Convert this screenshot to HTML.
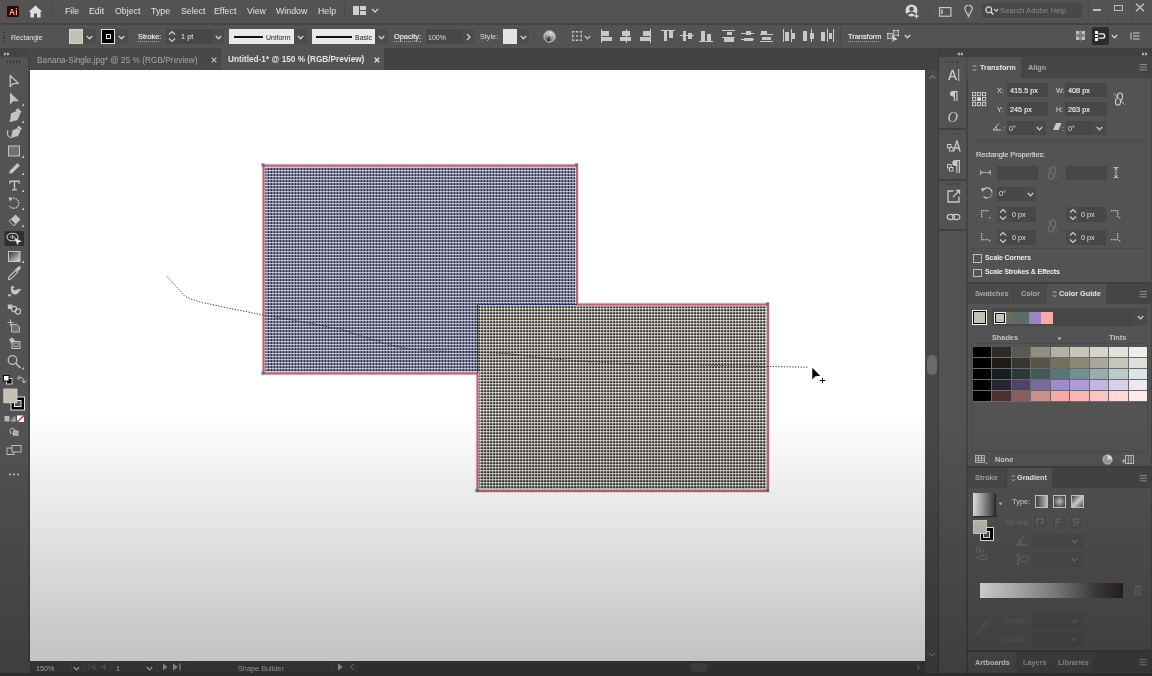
<!DOCTYPE html>
<html><head><meta charset="utf-8">
<style>
*{margin:0;padding:0;box-sizing:border-box}
html,body{width:1152px;height:676px;overflow:hidden;background:#535353;font-family:"Liberation Sans",sans-serif;color:#d8d8d8}
.a{position:absolute}
.t{position:absolute;white-space:nowrap;line-height:1;will-change:transform}
</style></head><body>
<!-- MENU BAR -->
<div class="a" style="left:0;top:0;width:1152px;height:23px;background:#535353"></div>
<div class="a" style="left:0;top:23px;width:1152px;height:2px;background:#434343"></div>

<!-- menu content -->
<div class="a" style="left:7px;top:6px;width:12px;height:11px;background:#330a03;border-radius:1px"></div>
<div class="t" style="left:8.7px;top:7.6px;font-size:8.3px;font-weight:bold;color:#f7b09a;letter-spacing:0.3px">Ai</div>
<svg class="a" style="left:28px;top:5px" width="15" height="13" viewBox="0 0 15 13"><path d="M7.5 0.6 L14.2 6.8 L12.6 6.8 L12.6 12.4 L9 12.4 L9 8.4 L6 8.4 L6 12.4 L2.4 12.4 L2.4 6.8 L0.8 6.8 Z" fill="#dedede"/></svg>
<div class="a" style="left:52px;top:2px;width:1px;height:18px;background:#4a4a4a"></div>
<div class="t" style="left:64.5px;top:6.5px;font-size:8.8px;color:#e2e2e2">File</div>
<div class="t" style="left:88.5px;top:6.5px;font-size:8.8px;color:#e2e2e2">Edit</div>
<div class="t" style="left:114.5px;top:6.5px;font-size:8.8px;color:#e2e2e2">Object</div>
<div class="t" style="left:151px;top:6.5px;font-size:8.8px;color:#e2e2e2">Type</div>
<div class="t" style="left:180.5px;top:6.5px;font-size:8.8px;color:#e2e2e2">Select</div>
<div class="t" style="left:214px;top:6.5px;font-size:8.8px;color:#e2e2e2">Effect</div>
<div class="t" style="left:247px;top:6.5px;font-size:8.8px;color:#e2e2e2">View</div>
<div class="t" style="left:275.5px;top:6.5px;font-size:8.8px;color:#e2e2e2">Window</div>
<div class="t" style="left:317.5px;top:6.5px;font-size:8.8px;color:#e2e2e2">Help</div>
<div class="a" style="left:344px;top:3px;width:1px;height:17px;background:#4a4a4a"></div>
<svg class="a" style="left:353px;top:6px" width="14" height="9" viewBox="0 0 14 9"><rect x="0" y="0" width="6" height="9" fill="#d0d0d0"/><rect x="7" y="0" width="6" height="4" fill="#d0d0d0"/><rect x="7" y="5" width="6" height="4" fill="#d0d0d0"/></svg>
<svg class="a" style="left:371px;top:8px" width="8" height="5" viewBox="0 0 8 5"><path d="M1 1 L4 4 L7 1" stroke="#d0d0d0" stroke-width="1.3" fill="none"/></svg>
<!-- right side of menu -->
<svg class="a" style="left:905px;top:4px" width="15" height="15" viewBox="0 0 15 15"><circle cx="6.5" cy="6.5" r="6" fill="#d8d8d8"/><circle cx="6.5" cy="5" r="2.3" fill="#535353"/><path d="M2.3 10.5 Q6.5 6.5 10.7 10.5" stroke="#535353" stroke-width="1.8" fill="none"/><path d="M11.5 10 V14.5 M9.2 12.2 H13.8" stroke="#d8d8d8" stroke-width="1.2"/></svg>
<div class="a" style="left:929px;top:3px;width:1px;height:17px;background:#4a4a4a"></div>
<svg class="a" style="left:939px;top:7px" width="13" height="10" viewBox="0 0 13 10"><rect x="0.6" y="0.6" width="11.3" height="8.6" stroke="#d0d0d0" stroke-width="1.1" fill="none"/><rect x="2.3" y="2.5" width="1.4" height="4.5" fill="#d0d0d0"/></svg>
<svg class="a" style="left:963.5px;top:5px" width="9" height="13" viewBox="0 0 9 13"><path d="M3 9 Q3 7.3 1.6 5.8 A3.6 3.6 0 1 1 7.4 5.8 Q6 7.3 6 9 Z" stroke="#d0d0d0" stroke-width="1.1" fill="none"/><path d="M3.3 10.6 H5.7 M3.8 12 H5.2" stroke="#d0d0d0" stroke-width="1.1"/></svg>
<div class="a" style="left:982px;top:3px;width:100px;height:15px;background:#484848;border-radius:1px"></div>
<svg class="a" style="left:985px;top:6px" width="14" height="10" viewBox="0 0 14 10"><circle cx="3.8" cy="3.8" r="2.9" stroke="#d8d8d8" stroke-width="1.3" fill="none"/><path d="M6 6 L8.3 8.5" stroke="#d8d8d8" stroke-width="1.5"/><path d="M9.2 3.2 L11.2 5.2 L13.2 3.2" stroke="#d8d8d8" stroke-width="1.1" fill="none"/></svg>
<div class="t" style="left:1000px;top:7px;font-size:7.7px;color:#8a8a8a">Search Adobe Help</div>
<div class="a" style="left:1088px;top:0px;width:1px;height:22px;background:#4c4c4c"></div>
<div class="a" style="left:1093px;top:9px;width:8px;height:1.5px;background:#bdbdbd"></div>
<div class="a" style="left:1108px;top:0px;width:1px;height:22px;background:#4c4c4c"></div>
<div class="a" style="left:1114px;top:5px;width:8.5px;height:6px;border:1.3px solid #bdbdbd"></div>
<div class="a" style="left:1131px;top:0px;width:1px;height:22px;background:#4c4c4c"></div>
<svg class="a" style="left:1135px;top:3px" width="10" height="9" viewBox="0 0 10 9"><path d="M1 0.8 L9 8.2 M9 0.8 L1 8.2" stroke="#c4c4c4" stroke-width="1.3"/></svg>

<!-- CONTROL BAR -->
<div class="a" style="left:0;top:25px;width:1152px;height:23px;background:#535353"></div>

<!-- control content -->
<div class="a" style="left:3px;top:29px;width:2px;height:14px;background:repeating-linear-gradient(#3c3c3c 0 1.2px,transparent 1.2px 2.8px)"></div>
<div class="t" style="left:10.5px;top:33.5px;font-size:7px;color:#e4e4e4">Rectangle</div>
<div class="a" style="left:69px;top:29px;width:14px;height:14.5px;background:#c3c1b4;border:1px solid #d4d3cb"></div>
<div class="a" style="left:83px;top:29px;width:13px;height:14.5px;background:#4c4c4c"></div>
<svg class="a" style="left:86px;top:35px" width="7" height="5" viewBox="0 0 7 5"><path d="M0.8 1 L3.5 3.8 L6.2 1" stroke="#d0d0d0" stroke-width="1.3" fill="none"/></svg>
<div class="a" style="left:100.5px;top:29px;width:14.5px;height:14.5px;background:#000;border:1px solid #e0e0e0"></div>
<div class="a" style="left:105.5px;top:34px;width:5.5px;height:5px;border:1.3px solid #e0e0e0;background:#000"></div>
<div class="a" style="left:115px;top:29px;width:13px;height:14.5px;background:#4c4c4c"></div>
<svg class="a" style="left:118px;top:35px" width="7" height="5" viewBox="0 0 7 5"><path d="M0.8 1 L3.5 3.8 L6.2 1" stroke="#d0d0d0" stroke-width="1.3" fill="none"/></svg>
<div class="t" style="left:137.8px;top:32.8px;font-size:7.4px;color:#ececec;-webkit-text-stroke:0.15px #ececec">Stroke:</div>
<div class="a" style="left:138px;top:41px;width:22px;height:1px;background:repeating-linear-gradient(to right,#aaa 0 1px,transparent 1px 2px)"></div>
<div class="a" style="left:166px;top:29px;width:12px;height:14.5px;background:#4a4a4a"></div>
<svg class="a" style="left:168px;top:30px" width="8" height="13" viewBox="0 0 8 13"><path d="M1 4.5 L4 1.5 L7 4.5 M1 8.5 L4 11.5 L7 8.5" stroke="#d0d0d0" stroke-width="1.2" fill="none"/></svg>
<div class="a" style="left:178px;top:29px;width:34px;height:14.5px;background:#474747"></div>
<div class="t" style="left:181px;top:32.8px;font-size:7.4px;color:#e6e6e6">1 pt</div>
<div class="a" style="left:212px;top:29px;width:12px;height:14.5px;background:#4c4c4c"></div>
<svg class="a" style="left:214.5px;top:35px" width="7" height="5" viewBox="0 0 7 5"><path d="M0.8 1 L3.5 3.8 L6.2 1" stroke="#d0d0d0" stroke-width="1.3" fill="none"/></svg>
<div class="a" style="left:229px;top:29px;width:65px;height:14.5px;background:#e9e9e9"></div>
<div class="a" style="left:234px;top:36px;width:29px;height:2px;background:#111"></div>
<div class="t" style="left:266px;top:33.8px;font-size:7px;color:#222">Uniform</div>
<div class="a" style="left:294px;top:29px;width:13px;height:14.5px;background:#4c4c4c"></div>
<svg class="a" style="left:297px;top:35px" width="7" height="5" viewBox="0 0 7 5"><path d="M0.8 1 L3.5 3.8 L6.2 1" stroke="#d0d0d0" stroke-width="1.3" fill="none"/></svg>
<div class="a" style="left:312px;top:29px;width:63px;height:14.5px;background:#e9e9e9"></div>
<div class="a" style="left:316px;top:35.5px;width:36px;height:2.5px;background:#111"></div>
<div class="t" style="left:355px;top:33.8px;font-size:7px;color:#222">Basic</div>
<div class="a" style="left:375px;top:29px;width:13px;height:14.5px;background:#4c4c4c"></div>
<svg class="a" style="left:378px;top:35px" width="7" height="5" viewBox="0 0 7 5"><path d="M0.8 1 L3.5 3.8 L6.2 1" stroke="#d0d0d0" stroke-width="1.3" fill="none"/></svg>
<div class="t" style="left:394px;top:32.8px;font-size:7.4px;color:#ececec;-webkit-text-stroke:0.15px #ececec">Opacity:</div>
<div class="a" style="left:394px;top:41px;width:27px;height:1px;background:repeating-linear-gradient(to right,#aaa 0 1px,transparent 1px 2px)"></div>
<div class="a" style="left:426px;top:29px;width:36px;height:14.5px;background:#474747"></div>
<div class="t" style="left:428px;top:33.5px;font-size:7px;color:#dcdcdc">100%</div>
<div class="a" style="left:462px;top:29px;width:12px;height:14.5px;background:#4c4c4c"></div>
<svg class="a" style="left:466px;top:33px" width="5" height="8" viewBox="0 0 5 8"><path d="M1 1 L4 4 L1 7" stroke="#d0d0d0" stroke-width="1.3" fill="none"/></svg>
<div class="t" style="left:480px;top:32.8px;font-size:7.2px;color:#dcdcdc">Style:</div>
<div class="a" style="left:503px;top:29px;width:14px;height:14.5px;background:#e4e4e4"></div>
<div class="a" style="left:517px;top:29px;width:12px;height:14.5px;background:#4c4c4c"></div>
<svg class="a" style="left:519.5px;top:35px" width="7" height="5" viewBox="0 0 7 5"><path d="M0.8 1 L3.5 3.8 L6.2 1" stroke="#d0d0d0" stroke-width="1.3" fill="none"/></svg>
<div class="a" style="left:533px;top:27px;width:1px;height:19px;background:#4f4f4f"></div>
<svg class="a" style="left:542.5px;top:29.5px" width="13" height="13" viewBox="0 0 13 13"><path d="M6.5 6.5 L6.50 1.30 A5.2 5.2 0 0 1 9.56 2.29 Z" fill="#e6e6e6"/><path d="M6.5 6.5 L9.56 2.29 A5.2 5.2 0 0 1 11.45 4.89 Z" fill="#d0d0d0"/><path d="M6.5 6.5 L11.45 4.89 A5.2 5.2 0 0 1 11.45 8.11 Z" fill="#bdbdbd"/><path d="M6.5 6.5 L11.45 8.11 A5.2 5.2 0 0 1 9.56 10.71 Z" fill="#a0a0a0"/><path d="M6.5 6.5 L9.56 10.71 A5.2 5.2 0 0 1 6.50 11.70 Z" fill="#7a7a7a"/><path d="M6.5 6.5 L6.50 11.70 A5.2 5.2 0 0 1 3.44 10.71 Z" fill="#2a2a2a"/><path d="M6.5 6.5 L3.44 10.71 A5.2 5.2 0 0 1 1.55 8.11 Z" fill="#6a6a6a"/><path d="M6.5 6.5 L1.55 8.11 A5.2 5.2 0 0 1 1.55 4.89 Z" fill="#9a9a9a"/><path d="M6.5 6.5 L1.55 4.89 A5.2 5.2 0 0 1 3.44 2.29 Z" fill="#b8b8b8"/><path d="M6.5 6.5 L3.44 2.29 A5.2 5.2 0 0 1 6.50 1.30 Z" fill="#cfcfcf"/><circle cx="6.5" cy="6.5" r="5.6" fill="none" stroke="#d8d8d8" stroke-width="1"/></svg>
<div class="a" style="left:562px;top:27px;width:1px;height:19px;background:#4f4f4f"></div>
<svg class="a" style="left:572px;top:31px" width="10" height="10" viewBox="0 0 10 10"><rect x="0" y="0" width="1.6" height="1.6" fill="#d8d8d8"/><rect x="0" y="4.2" width="1.6" height="1.6" fill="#d8d8d8"/><rect x="0" y="8.4" width="1.6" height="1.6" fill="#d8d8d8"/><rect x="4.2" y="0" width="1.6" height="1.6" fill="#d8d8d8"/><rect x="4.2" y="4.2" width="1.6" height="1.6" fill="#d8d8d8"/><rect x="4.2" y="8.4" width="1.6" height="1.6" fill="#d8d8d8"/><rect x="8.4" y="0" width="1.6" height="1.6" fill="#d8d8d8"/><rect x="8.4" y="4.2" width="1.6" height="1.6" fill="#d8d8d8"/><rect x="8.4" y="8.4" width="1.6" height="1.6" fill="#d8d8d8"/><path d="M1.6 0.8 H4.2 M5.8 0.8 H8.4 M1.6 9.2 H4.2 M5.8 9.2 H8.4 M0.8 1.6 V4.2 M0.8 5.8 V8.4 M9.2 1.6 V4.2 M9.2 5.8 V8.4" stroke="#9a9a9a" stroke-width="0.7"/></svg>
<svg class="a" style="left:584px;top:34.5px" width="7" height="5" viewBox="0 0 7 5"><path d="M0.8 1 L3.5 3.8 L6.2 1" stroke="#bbb" stroke-width="1.3" fill="none"/></svg>
<div class="a" style="left:595px;top:27px;width:1px;height:19px;background:#4f4f4f"></div>
<div class="a" style="left:601px;top:29px;width:1px;height:13.5px;background:#c8c8c8"></div><div class="a" style="left:602px;top:31px;width:7px;height:4.5px;background:#c8c8c8"></div><div class="a" style="left:602px;top:37px;width:10px;height:4px;background:#c8c8c8"></div><div class="a" style="left:625.5px;top:29px;width:1px;height:13.5px;background:#c8c8c8"></div><div class="a" style="left:621.5px;top:31px;width:8px;height:4.5px;background:#c8c8c8"></div><div class="a" style="left:620px;top:37px;width:11px;height:4px;background:#c8c8c8"></div><div class="a" style="left:650px;top:29px;width:1px;height:13.5px;background:#c8c8c8"></div><div class="a" style="left:643px;top:31px;width:7px;height:4.5px;background:#c8c8c8"></div><div class="a" style="left:640px;top:37px;width:10px;height:4px;background:#c8c8c8"></div><div class="a" style="left:661px;top:30px;width:14px;height:1px;background:#c8c8c8"></div><div class="a" style="left:663.5px;top:31px;width:3.5px;height:10px;background:#c8c8c8"></div><div class="a" style="left:668.5px;top:31px;width:4.5px;height:6.5px;background:#c8c8c8"></div><div class="a" style="left:680px;top:35px;width:14px;height:1px;background:#c8c8c8"></div><div class="a" style="left:682.5px;top:31px;width:3.5px;height:10px;background:#c8c8c8"></div><div class="a" style="left:688px;top:32.5px;width:4px;height:6px;background:#c8c8c8"></div><div class="a" style="left:699px;top:41px;width:14px;height:1px;background:#c8c8c8"></div><div class="a" style="left:701px;top:31px;width:4px;height:10px;background:#c8c8c8"></div><div class="a" style="left:706.5px;top:34px;width:4.5px;height:7px;background:#c8c8c8"></div><div class="a" style="left:722px;top:30px;width:13px;height:1px;background:#c8c8c8"></div><div class="a" style="left:727px;top:31.5px;width:4.5px;height:3.5px;background:#c8c8c8"></div><div class="a" style="left:722px;top:37px;width:13px;height:1px;background:#c8c8c8"></div><div class="a" style="left:724px;top:37.5px;width:9.5px;height:4px;background:#c8c8c8"></div><div class="a" style="left:741px;top:32.5px;width:13px;height:1px;background:#c8c8c8"></div><div class="a" style="left:746px;top:31px;width:5px;height:4px;background:#c8c8c8"></div><div class="a" style="left:741px;top:39px;width:13px;height:1px;background:#c8c8c8"></div><div class="a" style="left:743.5px;top:37.5px;width:9px;height:3.5px;background:#c8c8c8"></div><div class="a" style="left:760.5px;top:30.5px;width:6.5px;height:3px;background:#c8c8c8"></div><div class="a" style="left:760px;top:34px;width:13px;height:1px;background:#c8c8c8"></div><div class="a" style="left:762px;top:36.5px;width:9px;height:3.5px;background:#c8c8c8"></div><div class="a" style="left:760px;top:41px;width:13px;height:1px;background:#c8c8c8"></div><div class="a" style="left:783px;top:29px;width:1px;height:13px;background:#c8c8c8"></div><div class="a" style="left:785px;top:31.5px;width:4px;height:9px;background:#c8c8c8"></div><div class="a" style="left:790.5px;top:29px;width:1px;height:13px;background:#c8c8c8"></div><div class="a" style="left:792px;top:33px;width:3px;height:5.5px;background:#c8c8c8"></div><div class="a" style="left:803px;top:31px;width:4px;height:10px;background:#c8c8c8"></div><div class="a" style="left:807px;top:29px;width:1px;height:0px;background:#c8c8c8"></div><div class="a" style="left:811px;top:29px;width:1px;height:13px;background:#c8c8c8"></div><div class="a" style="left:809.5px;top:33px;width:4px;height:5.5px;background:#c8c8c8"></div><div class="a" style="left:821px;top:31.5px;width:4px;height:9px;background:#c8c8c8"></div><div class="a" style="left:826.5px;top:29px;width:1px;height:13px;background:#c8c8c8"></div><div class="a" style="left:829px;top:33px;width:3px;height:5.5px;background:#c8c8c8"></div><div class="a" style="left:833px;top:29px;width:1px;height:13px;background:#c8c8c8"></div>
<div class="a" style="left:840px;top:27px;width:1px;height:19px;background:#4a4a4a"></div>
<div class="t" style="left:847.5px;top:32.8px;font-size:7.4px;color:#ececec;-webkit-text-stroke:0.15px #ececec">Transform</div>
<div class="a" style="left:848px;top:40.5px;width:31px;height:1px;background:repeating-linear-gradient(to right,#aaa 0 1px,transparent 1px 2px)"></div>
<svg class="a" style="left:886px;top:29px" width="14" height="14" viewBox="0 0 14 14"><rect x="1.8" y="4.6" width="4.6" height="4.8" stroke="#c8c8c8" fill="#6a6a6a" stroke-width="0.8"/><rect x="7.6" y="1.6" width="4.8" height="5" stroke="#c8c8c8" fill="#6a6a6a" stroke-width="0.8"/><g fill="#dcdcdc"><circle cx="1.8" cy="4.6" r="0.8"/><circle cx="1.8" cy="9.4" r="0.8"/><circle cx="7.6" cy="1.6" r="0.8"/><circle cx="12.4" cy="1.6" r="0.8"/><circle cx="12.4" cy="6.6" r="0.8"/></g><path d="M6.6 6 L6.6 13 L8.2 11.3 L11.5 10.6 Z" fill="#d0d0d0"/></svg>
<svg class="a" style="left:904px;top:34px" width="7" height="5" viewBox="0 0 7 5"><path d="M0.8 1 L3.5 3.8 L6.2 1" stroke="#d0d0d0" stroke-width="1.3" fill="none"/></svg>
<svg class="a" style="left:1075px;top:30px" width="11" height="11" viewBox="0 0 11 11"><rect x="1" y="1" width="3.5" height="3.5" fill="#bdbdbd"/><rect x="6.5" y="1" width="3.5" height="3.5" fill="#bdbdbd"/><rect x="1" y="6.5" width="3.5" height="3.5" fill="#bdbdbd"/><rect x="6.5" y="6.5" width="3.5" height="3.5" fill="#bdbdbd"/><path d="M5.5 0 V11 M0 5.5 H11" stroke="#8a8a8a" stroke-width="0.8"/></svg>
<div class="a" style="left:1091.5px;top:27px;width:17px;height:18px;background:#2d2d2d;border-radius:2px"></div>
<div class="a" style="left:1095px;top:31px;width:3px;height:2.5px;background:#f0f0f0"></div>
<div class="a" style="left:1095px;top:34.5px;width:3px;height:2.5px;background:#f0f0f0"></div>
<div class="a" style="left:1095px;top:38px;width:3px;height:3px;background:#f0f0f0"></div>
<svg class="a" style="left:1098px;top:33px" width="8" height="6" viewBox="0 0 8 6"><path d="M0.5 0.8 H4.5 A2.2 2.2 0 0 1 4.5 5.2 H0.5" stroke="#f0f0f0" stroke-width="1.3" fill="none"/></svg>
<svg class="a" style="left:1110.5px;top:34px" width="7" height="5" viewBox="0 0 7 5"><path d="M0.8 1 L3.5 3.8 L6.2 1" stroke="#d0d0d0" stroke-width="1.3" fill="none"/></svg>
<svg class="a" style="left:1130px;top:32px" width="10" height="8" viewBox="0 0 10 8"><path d="M1 0.5 V7.5" stroke="#cfcfcf" stroke-width="1"/><path d="M3 1 H9.5 M3 4 H9.5 M3 7 H9.5" stroke="#cfcfcf" stroke-width="1"/></svg>

<!-- TAB ROW -->
<div class="a" style="left:0;top:48px;width:938px;height:22px;background:#424242"></div>
<div class="a" style="left:28px;top:48px;width:193px;height:22px;background:#484848"></div>
<div class="a" style="left:221px;top:48px;width:163px;height:22px;background:#535353"></div>

<div class="t" style="left:36.5px;top:55.8px;font-size:8.3px;color:#a8a8a8">Banana-Single.jpg* @ 25 % (RGB/Preview)</div>
<svg class="a" style="left:210.5px;top:57px" width="6" height="6" viewBox="0 0 6 6"><path d="M0.7 0.7 L5.3 5.3 M5.3 0.7 L0.7 5.3" stroke="#c0c0c0" stroke-width="1.2"/></svg>
<div class="t" style="left:228px;top:55.8px;font-size:8.23px;font-weight:bold;color:#e4e4e4">Untitled-1* @ 150 % (RGB/Preview)</div>
<svg class="a" style="left:373.5px;top:57px" width="6" height="6" viewBox="0 0 6 6"><path d="M0.7 0.7 L5.3 5.3 M5.3 0.7 L0.7 5.3" stroke="#e0e0e0" stroke-width="1.3"/></svg>
<!-- TOOLBAR -->
<div class="a" style="left:0;top:48px;width:28px;height:9px;background:#444"></div>
<div class="a" style="left:0;top:57px;width:28px;height:605px;background:#535353"></div>
<div class="a" style="left:28px;top:57px;width:2px;height:605px;background:#444"></div>
<!-- CANVAS -->
<div class="a" style="left:30px;top:70px;width:895px;height:591px;background:#fff"></div>
<!-- V SCROLL -->
<div class="a" style="left:925px;top:70px;width:13px;height:591px;background:#484848"></div>
<div class="a" style="left:927px;top:355px;width:10px;height:20px;border-radius:5px;background:#6a6a6a"></div>
<!-- STATUS BAR -->
<div class="a" style="left:30px;top:661px;width:908px;height:12px;background:#474747"></div>
<div class="a" style="left:0;top:673px;width:1152px;height:3px;background:#3a3a3a"></div>
<!-- RIGHT DOCK -->
<div class="a" style="left:937px;top:48px;width:215px;height:9.3px;background:#404040"></div>
<div class="a" style="left:938px;top:57px;width:1px;height:616px;background:#3a3a3a"></div>
<div class="a" style="left:939px;top:57px;width:27px;height:616px;background:#535353"></div>
<div class="a" style="left:966px;top:57px;width:2px;height:616px;background:#434343"></div>
<div class="a" style="left:968px;top:57px;width:184px;height:616px;background:#535353"></div>
<!-- toolbar header -->
<svg class="a" style="left:4px;top:51.5px" width="6" height="4" viewBox="0 0 6 4"><path d="M0.3 0.3 L2.5 2 L0.3 3.7 Z M3.3 0.3 L5.5 2 L3.3 3.7 Z" fill="#d8d8d8"/></svg>
<div class="a" style="left:7px;top:60px;width:14px;height:2.5px;background:repeating-linear-gradient(to right,#353535 0 1.5px,transparent 1.5px 2.9px)"></div>



<svg class="a" style="left:0;top:0" width="30" height="676" viewBox="0 0 30 676">
<defs><linearGradient id="tg" x1="0" y1="0" x2="1" y2="1"><stop offset="0" stop-color="#333"/><stop offset="1" stop-color="#ddd"/></linearGradient></defs>
<g fill="#c4c4c4">
<path d="M10.2 75.5 L10.2 86.5 L13 83.6 L18.3 83.4 Z" fill="none" stroke="#c4c4c4" stroke-width="1.3" stroke-linejoin="round"/>
<path d="M10 92.5 L10 104.5 L13.3 101.3 L19 101.3 Z"/>
<path d="M21.5 106 L24 103.5 L24 106 Z"/>
<path d="M11 113.5 L16.5 111 L20 114.5 L17.5 120 L10 122 L9.2 121.2 L12.5 117.8 A1 1 0 1 1 13.2 118.5 L9.9 121.8 Z"/>
<path d="M15.5 110.3 L18 108.3 L21.5 111.8 L19.5 114.3 Z"/>
<path d="M21.5 123 L24 120.5 L24 123 Z"/>
<path d="M12.5 130.5 L17.5 128 L20.5 131 L18 136 L11 138 Z"/>
<path d="M17 127.3 L19 125.8 L22 128.8 L20.5 130.5 Z"/>
<path d="M11 138 Q6 136 8 130" fill="none" stroke="#c4c4c4" stroke-width="1.1"/>
<rect x="8.5" y="146" width="11" height="10" fill="#707070" stroke="#c4c4c4" stroke-width="1"/>
<path d="M21.5 158 L24 155.5 L24 158 Z"/>
<path d="M9 173.8 L10 170.5 L17.5 163 L20 165.5 L12.5 173 Z"/>
<path d="M21.5 175 L24 172.5 L24 175 Z"/>
<path d="M9.3 180.5 H19.7 V183.8 H18.6 L18.2 181.9 H15.2 V189.3 H17 V190.6 H12 V189.3 H13.8 V181.9 H10.8 L10.4 183.8 H9.3 Z"/>
<path d="M21.5 192 L24 189.5 L24 192 Z"/>
<path d="M10.5 199.5 A5 5 0 1 1 9.5 206" fill="none" stroke="#c4c4c4" stroke-width="1.4" stroke-dasharray="1.6 0.9"/>
<path d="M8.5 197.5 L12.5 197.5 L10 201.5 Z"/>
<path d="M21.5 210 L24 207.5 L24 210 Z"/>
<path d="M9 221 L15.5 214.5 L20.5 219.5 L14 226 Z"/>
<path d="M9 221 L11 219 L16 224 L14 226 Z" fill="#5a5a5a" stroke="#c4c4c4" stroke-width="0.8"/>
<path d="M21.5 227 L24 224.5 L24 227 Z"/>
</g>
<rect x="4.5" y="231" width="19.5" height="15" rx="1.5" fill="#2e2e2e"/>
<g fill="none" stroke="#c4c4c4" stroke-width="1.1">
<ellipse cx="12.5" cy="237" rx="5.5" ry="3.8"/>
<path d="M10 237 H15 M12.5 235 V239" stroke-width="0.9"/>
</g>
<path d="M14 237.5 L22 241.5 L18.8 242.3 L17.8 245.5 Z" fill="#e0e0e0"/>
<rect x="8.5" y="251.5" width="11.5" height="10" fill="url(#tg)" stroke="#d0d0d0" stroke-width="0.9"/>
<g fill="#c4c4c4">
<path d="M21.5 263 L24 260.5 L24 263 Z"/>
<path d="M8.5 279.5 L8.8 277 L15.5 270.3 L17.5 272.3 L10.8 279 Z" fill="none" stroke="#c4c4c4" stroke-width="1.1"/>
<path d="M15 269.5 L18.5 266.5 Q20.5 265.8 21 267.8 L18.3 271.5 Z"/>
<path d="M11 286.5 Q13.5 285 14.5 287.3 Q13.8 288.6 12.6 288.3 Q13.5 290.5 15.5 290.2 Q17.5 289.5 18.5 288.8 Q21 288.5 21 290.5 Q20 291 19.5 290.5 Q19 293.5 15.5 294.5 Q12.5 295 11.5 292.5 Q10.5 289.5 11 286.5 Z"/>
<circle cx="9.5" cy="295.3" r="1.3"/>
<rect x="7.8" y="304.5" width="4.5" height="4.5"/>
<circle cx="14" cy="309" r="2.6" fill="none" stroke="#c4c4c4" stroke-width="1.1"/>
<circle cx="18" cy="311.5" r="2.6" fill="none" stroke="#c4c4c4" stroke-width="1.1"/>
<path d="M10.5 319.5 V326 M7.5 322.5 H13.5" stroke="#c4c4c4" stroke-width="0.9" fill="none"/>
<path d="M11.5 324.5 H17 L19.5 327 V332 H11.5 Z" fill="#707070" stroke="#c4c4c4" stroke-width="0.9"/>
<path d="M9 339.5 L12.5 337.5 L15 341 L11.5 343.5 Z"/>
<rect x="12" y="341.5" width="8" height="7" fill="none" stroke="#c4c4c4" stroke-width="1"/>
<rect x="14" y="343" width="4" height="3.5" fill="none" stroke="#c4c4c4" stroke-width="0.8"/>
<circle cx="12.5" cy="360" r="4.3" fill="none" stroke="#c4c4c4" stroke-width="1.2"/>
<path d="M15.5 363 L20.5 368" stroke="#c4c4c4" stroke-width="1.6"/>
<path d="M21.5 369.5 L24 367 L24 369.5 Z"/>
</g>
<rect x="6.5" y="378.5" width="5.5" height="5.5" fill="#000" stroke="#ddd" stroke-width="0.9"/>
<rect x="3.5" y="375.5" width="5.5" height="5.5" fill="#fff" stroke="#000" stroke-width="0.9"/>
<path d="M19 377.5 Q24 377 24 382 M22 380.5 L24 383 L26 380.5 M19 375.5 V379.5 L17.2 377.5" stroke="#c4c4c4" stroke-width="1" fill="none"/>
<rect x="11" y="397" width="13.5" height="13" fill="#000" stroke="#e6e6e6" stroke-width="1"/>
<rect x="14.5" y="400.5" width="6.5" height="6" fill="#535353" stroke="#e6e6e6" stroke-width="1"/>
<rect x="3.8" y="389" width="13.2" height="13.8" fill="#c4c2b5" stroke="#d6d5cd" stroke-width="0.8"/>
<rect x="4.5" y="416" width="5" height="5.5" fill="#b8b8b8"/>
<rect x="10.5" y="416" width="5" height="5.5" fill="url(#tg)"/>
<rect x="17" y="415.5" width="7" height="6.5" fill="#fff"/>
<path d="M17 422 L24 415.5" stroke="#c03030" stroke-width="1.3"/>
<g fill="none" stroke="#c4c4c4" stroke-width="1">
<circle cx="12.5" cy="431" r="2.6"/>
<rect x="13.5" y="431" width="4.5" height="4.2" fill="#aaa"/>
<rect x="7" y="448" width="7" height="6.5"/>
<rect x="12" y="445.5" width="9" height="6.5" fill="#535353"/>
</g>
<g fill="#c4c4c4"><circle cx="10" cy="474.5" r="1.1"/><circle cx="14" cy="474.5" r="1.1"/><circle cx="18" cy="474.5" r="1.1"/></g>
</svg>


<svg class="a" style="left:0;top:0" width="1152" height="676" viewBox="0 0 1152 676">
<defs>
<pattern id="p1" patternUnits="userSpaceOnUse" x="264" y="166" width="3" height="3"><rect x="0" y="0" width="1" height="1" fill="#6e7187"/><rect x="1" y="0" width="1" height="1" fill="#282a42"/><rect x="2" y="0" width="1" height="1" fill="#74788c"/><rect x="0" y="1" width="1" height="1" fill="#b8bbd0"/><rect x="1" y="1" width="1" height="1" fill="#aeb1c6"/><rect x="2" y="1" width="1" height="1" fill="#cdd0e2"/><rect x="0" y="2" width="1" height="1" fill="#7a7e94"/><rect x="1" y="2" width="1" height="1" fill="#363850"/><rect x="2" y="2" width="1" height="1" fill="#82869c"/></pattern>
<pattern id="p2" patternUnits="userSpaceOnUse" x="478" y="305" width="3" height="3"><rect x="0" y="0" width="1" height="1" fill="#c6c4bc"/><rect x="1" y="0" width="1" height="1" fill="#b0aea6"/><rect x="2" y="0" width="1" height="1" fill="#dedcd5"/><rect x="0" y="1" width="1" height="1" fill="#64625c"/><rect x="1" y="1" width="1" height="1" fill="#5a5854"/><rect x="2" y="1" width="1" height="1" fill="#bab8b0"/><rect x="0" y="2" width="1" height="1" fill="#4a4844"/><rect x="1" y="2" width="1" height="1" fill="#2e2c28"/><rect x="2" y="2" width="1" height="1" fill="#9e9c94"/></pattern>
</defs>
<rect x="263.5" y="165.5" width="313.5" height="208" fill="url(#p1)"/>
<rect x="477.5" y="304.5" width="290.5" height="186.5" fill="url(#p2)"/>
<path d="M263.5 165.5 H577 V304.5 H768 V491 H477.5 V373.5 H263.5 Z" fill="none" stroke="#f6d2d8" stroke-width="4" opacity="0.7"/>
<path d="M263.5 165.5 H577 V304.5 H768 V491 H477.5 V373.5 H263.5 Z" fill="none" stroke="#b46674" stroke-width="2"/>
<path d="M477.5 373.5 V304.5 H577" fill="none" stroke="#2a3370" stroke-width="1"/>
<rect x="261.5" y="163.5" width="3" height="3" fill="#6c6a8e"/>
<rect x="575" y="163.5" width="3" height="3" fill="#6c6a8e"/>
<rect x="766" y="302.5" width="3" height="3" fill="#6c6a8e"/>
<rect x="475.5" y="489" width="3" height="3" fill="#6c6a8e"/>
<rect x="766" y="489" width="3" height="3" fill="#6c6a8e"/>
<rect x="261.5" y="371.5" width="3" height="3" fill="#6c6a8e"/>
<path d="M167 276.5 Q176 286 184.5 296 Q192 300 204.7 303 L228 308 L263 315 L290 319.5 L342.4 329.7 L371.6 339.5 L400.8 347.5 Q420 350.5 437 351 L478.7 352 L510 354 L546.8 358.4 L583.3 361.4 L619.8 363.3 L700 365 L767 366.5 L808 367.2" fill="none" stroke="#2a2a2a" stroke-width="1" stroke-dasharray="1.2 1.6"/>
<path d="M812.3 367.8 L812.3 379.6 L815.3 376.3 L820.2 375.8 Z" fill="#000"/>
<path d="M822.5 377.8 V383.3 M819.8 380.5 H825.2" stroke="#111" stroke-width="1"/>
</svg>

<svg class="a" style="left:956.5px;top:52px" width="6" height="4" viewBox="0 0 6 4"><path d="M2.5 0.3 L0.3 2 L2.5 3.7 Z M5.5 0.3 L3.3 2 L5.5 3.7 Z" fill="#d8d8d8"/></svg><svg class="a" style="left:1142px;top:52px" width="6" height="4" viewBox="0 0 6 4"><path d="M0.3 0.3 L2.5 2 L0.3 3.7 Z M3.3 0.3 L5.5 2 L3.3 3.7 Z" fill="#d8d8d8"/></svg><div class="a" style="left:968px;top:57px;width:184px;height:20.5px;background:#454545"></div><div class="a" style="left:967px;top:57px;width:54px;height:21px;background:#535353"></div><svg class="a" style="left:972px;top:63.5px" width="5" height="8" viewBox="0 0 5 8"><path d="M0.7 3 L2.5 1 L4.3 3 M0.7 5 L2.5 7 L4.3 5" stroke="#bdbdbd" stroke-width="0.9" fill="none"/></svg><div class="t" style="left:980px;top:63.5px;font-size:7.3px;font-weight:bold;color:#e6e6e6;">Transform</div><div class="t" style="left:1028px;top:63.5px;font-size:7.3px;font-weight:bold;color:#aaaaaa;">Align</div><svg class="a" style="left:1139px;top:64px" width="9" height="7" viewBox="0 0 9 7"><path d="M0.5 0.6 H8 M0.5 3.2 H8 M0.5 5.8 H8" stroke="#9c9c9c" stroke-width="0.85"/></svg><svg class="a" style="left:971px;top:91px" width="16" height="16" viewBox="0 0 16 16"><g fill="none" stroke="#d0d0d0" stroke-width="0.9"><rect x="1.5" y="1.5" width="3.2" height="3.2"/><rect x="1.5" y="6.5" width="3.2" height="3.2"/><rect x="1.5" y="11.5" width="3.2" height="3.2"/><rect x="6.5" y="1.5" width="3.2" height="3.2"/><rect x="6.5" y="11.5" width="3.2" height="3.2"/><rect x="11.5" y="1.5" width="3.2" height="3.2"/><rect x="11.5" y="6.5" width="3.2" height="3.2"/><rect x="11.5" y="11.5" width="3.2" height="3.2"/></g><rect x="6.3" y="6.3" width="3.6" height="3.6" fill="#e8e8e8"/></svg><div class="t" style="left:997px;top:86.5px;font-size:7px;color:#dedede;">X:</div><div class="a" style="left:1007px;top:83px;width:41px;height:13.5px;background:#474747"></div><div class="t" style="left:1010px;top:86.5px;font-size:7.3px;color:#f2f2f2;-webkit-text-stroke:0.12px #f2f2f2">415.5 px</div><div class="t" style="left:997px;top:105.5px;font-size:7px;color:#dedede;">Y:</div><div class="a" style="left:1007px;top:102px;width:41px;height:13.5px;background:#474747"></div><div class="t" style="left:1010px;top:105.5px;font-size:7.3px;color:#f2f2f2;-webkit-text-stroke:0.12px #f2f2f2">245 px</div><div class="t" style="left:1056px;top:86.5px;font-size:7px;color:#dedede;">W:</div><div class="a" style="left:1065px;top:83px;width:42px;height:13.5px;background:#474747"></div><div class="t" style="left:1068px;top:86.5px;font-size:7.3px;color:#f2f2f2;-webkit-text-stroke:0.12px #f2f2f2">408 px</div><div class="t" style="left:1056px;top:105.5px;font-size:7px;color:#dedede;">H:</div><div class="a" style="left:1065px;top:102px;width:42px;height:13.5px;background:#474747"></div><div class="t" style="left:1068px;top:105.5px;font-size:7.3px;color:#f2f2f2;-webkit-text-stroke:0.12px #f2f2f2">263 px</div><svg class="a" style="left:1112px;top:92px" width="14" height="14" viewBox="0 0 14 14"><g fill="none" stroke="#c8c8c8" stroke-width="1.2"><path d="M5.5 6.5 V3.5 A2.5 2.5 0 0 1 10.5 3.5 V5.5 A2.5 2.5 0 0 1 8.5 8"/><path d="M8.5 7.5 V10.5 A2.5 2.5 0 0 1 3.5 10.5 V8.5 A2.5 2.5 0 0 1 5.5 6"/><path d="M2 1.5 L12.5 12.5" stroke-width="1"/></g></svg><svg class="a" style="left:992px;top:122px" width="10" height="9" viewBox="0 0 10 9"><path d="M1 8 H9 M1 8 L7 1.5 M5 8 A4 4 0 0 0 4 5" stroke="#c8c8c8" stroke-width="1" fill="none"/></svg><div class="t" style="left:1003px;top:124.5px;font-size:7px;color:#cfcfcf;">:</div><div class="a" style="left:1007px;top:121px;width:26px;height:13.5px;background:#474747"></div><div class="t" style="left:1009px;top:124.5px;font-size:7.2px;color:#e2e2e2;">0°</div><div class="a" style="left:1033px;top:121px;width:13px;height:13.5px;background:#4a4a4a"></div><svg class="a" style="left:1036px;top:126px" width="7" height="5" viewBox="0 0 7 5"><path d="M0.8 1 L3.5 3.8 L6.2 1" stroke="#cfcfcf" stroke-width="1.2" fill="none"/></svg><svg class="a" style="left:1052px;top:122px" width="10" height="9" viewBox="0 0 10 9"><path d="M1 8 L4 1 H9.5 L6.5 8 Z" fill="#c8c8c8"/></svg><div class="t" style="left:1062px;top:124.5px;font-size:7px;color:#cfcfcf;">:</div><div class="a" style="left:1066px;top:121px;width:27px;height:13.5px;background:#474747"></div><div class="t" style="left:1068px;top:124.5px;font-size:7.2px;color:#e2e2e2;">0°</div><div class="a" style="left:1093px;top:121px;width:13px;height:13.5px;background:#4a4a4a"></div><svg class="a" style="left:1096px;top:126px" width="7" height="5" viewBox="0 0 7 5"><path d="M0.8 1 L3.5 3.8 L6.2 1" stroke="#cfcfcf" stroke-width="1.2" fill="none"/></svg><div class="a" style="left:973px;top:139.5px;width:175px;height:1px;background:#4a4a4a"></div><div class="t" style="left:975.5px;top:151px;font-size:7.4px;color:#dadada;-webkit-text-stroke:0.12px #dadada;letter-spacing:-0.1px">Rectangle Properties:</div><svg class="a" style="left:980px;top:169.5px" width="11" height="5" viewBox="0 0 11 5"><path d="M0.5 0 V5 M10.5 0 V5 M1 2.5 H10 M1 2.5 L2.5 1.2 M1 2.5 L2.5 3.8 M10 2.5 L8.5 1.2 M10 2.5 L8.5 3.8" stroke="#bdbdbd" stroke-width="0.8" fill="none"/></svg><div class="a" style="left:996.5px;top:165.5px;width:41.5px;height:14px;background:#474747"></div><svg class="a" style="left:1045px;top:166px" width="14" height="14" viewBox="0 0 14 14"><g fill="none" stroke="#707070" stroke-width="1.2"><path d="M5.5 6.5 V3.5 A2.5 2.5 0 0 1 10.5 3.5 V5.5 A2.5 2.5 0 0 1 8.5 8"/><path d="M8.5 7.5 V10.5 A2.5 2.5 0 0 1 3.5 10.5 V8.5 A2.5 2.5 0 0 1 5.5 6"/><path d="M2 1.5 L12.5 12.5" stroke-width="1"/></g></svg><div class="a" style="left:1066px;top:165.5px;width:41px;height:14px;background:#474747"></div><svg class="a" style="left:1112.5px;top:167px" width="6" height="11" viewBox="0 0 6 11"><path d="M0.5 0.5 H5.5 M0.5 10.5 H5.5 M3 1 V10 M3 1 L1.5 2.5 M3 1 L4.5 2.5 M3 10 L1.5 8.5 M3 10 L4.5 8.5" stroke="#c4c4c4" stroke-width="0.9" fill="none"/></svg><svg class="a" style="left:980px;top:186px" width="14" height="14" viewBox="0 0 14 14"><path d="M3 4 A5 5 0 1 1 3.5 10.5" stroke="#c0c0c0" stroke-width="1.3" fill="none" stroke-dasharray="12 1 1 1 1 1 1 1"/><path d="M1 2 L5.5 2.5 L2.5 6 Z" fill="#c0c0c0"/></svg><div class="a" style="left:996.5px;top:186.5px;width:27px;height:14px;background:#474747"></div><div class="t" style="left:999px;top:190px;font-size:7.2px;color:#e2e2e2;">0°</div><div class="a" style="left:1023.5px;top:186.5px;width:12.5px;height:14px;background:#4a4a4a"></div><svg class="a" style="left:1026.5px;top:191.5px" width="7" height="5" viewBox="0 0 7 5"><path d="M0.8 1 L3.5 3.8 L6.2 1" stroke="#cfcfcf" stroke-width="1.2" fill="none"/></svg><svg class="a" style="left:980px;top:209px" width="12" height="11" viewBox="0 0 12 11"><g fill="#bcbcbc"><rect x="1" y="1" width="1.3" height="1.3"/><rect x="3" y="1" width="1.3" height="1.3"/><rect x="5" y="1" width="1.3" height="1.3"/><rect x="7" y="1" width="1.3" height="1.3"/><rect x="1" y="3" width="1.3" height="1.3"/><rect x="1" y="5" width="1.3" height="1.3"/><rect x="1" y="7" width="1.3" height="1.3"/><rect x="9" y="8" width="1.3" height="1.3"/></g></svg><svg class="a" style="left:980px;top:232px" width="12" height="11" viewBox="0 0 12 11"><g fill="#bcbcbc"><rect x="1" y="1" width="1.3" height="1.3"/><rect x="1" y="3" width="1.3" height="1.3"/><rect x="1" y="5" width="1.3" height="1.3"/><rect x="1" y="7" width="1.3" height="1.3"/><rect x="3" y="7" width="1.3" height="1.3"/><rect x="5" y="7" width="1.3" height="1.3"/><rect x="7" y="7" width="1.3" height="1.3"/><rect x="9" y="8" width="1.3" height="1.3"/></g></svg><svg class="a" style="left:1110px;top:209px" width="12" height="11" viewBox="0 0 12 11"><g fill="#bcbcbc"><rect x="1" y="1" width="1.3" height="1.3"/><rect x="3" y="1" width="1.3" height="1.3"/><rect x="5" y="1" width="1.3" height="1.3"/><rect x="7" y="1" width="1.3" height="1.3"/><rect x="7" y="3" width="1.3" height="1.3"/><rect x="7" y="5" width="1.3" height="1.3"/><rect x="7" y="7" width="1.3" height="1.3"/><rect x="9" y="8" width="1.3" height="1.3"/></g></svg><svg class="a" style="left:1110px;top:232px" width="12" height="11" viewBox="0 0 12 11"><g fill="#bcbcbc"><rect x="7" y="1" width="1.3" height="1.3"/><rect x="7" y="3" width="1.3" height="1.3"/><rect x="7" y="5" width="1.3" height="1.3"/><rect x="7" y="7" width="1.3" height="1.3"/><rect x="1" y="7" width="1.3" height="1.3"/><rect x="3" y="7" width="1.3" height="1.3"/><rect x="5" y="7" width="1.3" height="1.3"/><rect x="9" y="8" width="1.3" height="1.3"/></g></svg><div class="a" style="left:996.5px;top:207px;width:12px;height:14.5px;background:#4a4a4a"></div><svg class="a" style="left:999.0px;top:208px" width="8" height="13" viewBox="0 0 8 13"><path d="M1 4.5 L4 1.5 L7 4.5 M1 8.5 L4 11.5 L7 8.5" stroke="#d0d0d0" stroke-width="1.1" fill="none"/></svg><div class="a" style="left:1008.5px;top:207px;width:27.5px;height:14.5px;background:#474747"></div><div class="t" style="left:1011.5px;top:211px;font-size:7.2px;color:#e2e2e2;">0 px</div><div class="a" style="left:996.5px;top:230px;width:12px;height:14.5px;background:#4a4a4a"></div><svg class="a" style="left:999.0px;top:231px" width="8" height="13" viewBox="0 0 8 13"><path d="M1 4.5 L4 1.5 L7 4.5 M1 8.5 L4 11.5 L7 8.5" stroke="#d0d0d0" stroke-width="1.1" fill="none"/></svg><div class="a" style="left:1008.5px;top:230px;width:27.5px;height:14.5px;background:#474747"></div><div class="t" style="left:1011.5px;top:234px;font-size:7.2px;color:#e2e2e2;">0 px</div><div class="a" style="left:1066px;top:207px;width:12px;height:14.5px;background:#4a4a4a"></div><svg class="a" style="left:1068.5px;top:208px" width="8" height="13" viewBox="0 0 8 13"><path d="M1 4.5 L4 1.5 L7 4.5 M1 8.5 L4 11.5 L7 8.5" stroke="#d0d0d0" stroke-width="1.1" fill="none"/></svg><div class="a" style="left:1078px;top:207px;width:28px;height:14.5px;background:#474747"></div><div class="t" style="left:1081px;top:211px;font-size:7.2px;color:#e2e2e2;">0 px</div><div class="a" style="left:1066px;top:230px;width:12px;height:14.5px;background:#4a4a4a"></div><svg class="a" style="left:1068.5px;top:231px" width="8" height="13" viewBox="0 0 8 13"><path d="M1 4.5 L4 1.5 L7 4.5 M1 8.5 L4 11.5 L7 8.5" stroke="#d0d0d0" stroke-width="1.1" fill="none"/></svg><div class="a" style="left:1078px;top:230px;width:28px;height:14.5px;background:#474747"></div><div class="t" style="left:1081px;top:234px;font-size:7.2px;color:#e2e2e2;">0 px</div><svg class="a" style="left:1045px;top:219px" width="14" height="14" viewBox="0 0 14 14"><g fill="none" stroke="#707070" stroke-width="1.2"><path d="M5.5 6.5 V3.5 A2.5 2.5 0 0 1 10.5 3.5 V5.5 A2.5 2.5 0 0 1 8.5 8"/><path d="M8.5 7.5 V10.5 A2.5 2.5 0 0 1 3.5 10.5 V8.5 A2.5 2.5 0 0 1 5.5 6"/><path d="M2 1.5 L12.5 12.5" stroke-width="1"/></g></svg><div class="a" style="left:970px;top:248px;width:178px;height:1px;background:#4a4a4a"></div><div class="a" style="left:973px;top:254px;width:8.5px;height:8.5px;border:1px solid #bdbdbd"></div><div class="t" style="left:985px;top:254.5px;font-size:7.1px;color:#ececec;font-weight:bold;letter-spacing:-0.15px">Scale Corners</div><div class="a" style="left:973px;top:268.5px;width:8.5px;height:8.5px;border:1px solid #bdbdbd"></div><div class="t" style="left:985px;top:269px;font-size:7.1px;color:#ececec;font-weight:bold;letter-spacing:-0.2px">Scale Strokes &amp; Effects</div><div class="a" style="left:966px;top:281.5px;width:186px;height:2px;background:#3e3e3e"></div>
<div class="a" style="left:939px;top:128px;width:27px;height:1.5px;background:#404040"></div><div class="a" style="left:939px;top:179px;width:27px;height:1.5px;background:#404040"></div><div class="a" style="left:939px;top:229px;width:27px;height:1.5px;background:#404040"></div><div class="a" style="left:947px;top:61px;width:13px;height:1.5px;background:repeating-linear-gradient(to right,#3a3a3a 0 1.3px,transparent 1.3px 2.6px)"></div><div class="a" style="left:947px;top:132.5px;width:13px;height:1.5px;background:repeating-linear-gradient(to right,#3a3a3a 0 1.3px,transparent 1.3px 2.6px)"></div><div class="a" style="left:947px;top:183px;width:13px;height:1.5px;background:repeating-linear-gradient(to right,#3a3a3a 0 1.3px,transparent 1.3px 2.6px)"></div><svg class="a" style="left:939px;top:57px" width="27" height="180" viewBox="939 57 27 180">
<g fill="#c8c8c8" stroke="none">
<path d="M948 80 L951.7 69.8 L953.3 69.8 L957 80 L955.3 80 L954.4 77.3 L950.6 77.3 L949.7 80 Z M951.1 75.9 L953.9 75.9 L952.5 71.8 Z"/>
<rect x="958.2" y="69" width="1" height="12"/>
<path d="M952 91 H957.5 V101 H956.3 V92.2 H955 V101 H953.8 V96.5 H952.5 A2.8 2.8 0 0 1 952 91 Z"/>
</g>
<text x="947.5" y="121.5" font-family="Liberation Serif" font-style="italic" font-size="14.5" fill="#c8c8c8">O</text>
<g fill="#c8c8c8">
<path d="M953 151.5 L956.2 140.5 L957.6 140.5 L960.8 151.5 L959.3 151.5 L958.5 148.7 L955.2 148.7 L954.4 151.5 Z M955.6 147.3 L958.1 147.3 L956.9 143 Z"/>
</g>
<g fill="none" stroke="#c8c8c8" stroke-width="1">
<rect x="947.5" y="144.5" width="3.5" height="3.5"/><rect x="949.5" y="147.5" width="3.5" height="3.5" fill="#535353"/>
<rect x="947.5" y="164.5" width="3.5" height="3.5"/><rect x="949.5" y="167.5" width="3.5" height="3.5" fill="#535353"/>
</g>
<path d="M955 160 H960 V173 H958.8 V161.2 H957.5 V173 H956.3 V166 H955.5 A3 3 0 0 1 955 160 Z" fill="#c8c8c8"/>
<g fill="none" stroke="#c8c8c8" stroke-width="1.3">
<path d="M953.5 191 H948 V202 H959 V196.5"/>
<path d="M953 197 L959.5 190.5 M956 190.5 H959.5 V194"/>
<ellipse cx="950.8" cy="217" rx="3.6" ry="2.6" stroke-width="1.2"/><ellipse cx="956.2" cy="217" rx="3.6" ry="2.6" stroke-width="1.2"/>
</g>
</svg>
<svg class="a" style="left:928.5px;top:75px" width="7" height="4" viewBox="0 0 7 4"><path d="M0.5 3.5 L3.5 0.8 L6.5 3.5" stroke="#a8a8a8" stroke-width="0.9" fill="none"/></svg>

<div class="a" style="left:968px;top:283.5px;width:184px;height:20px;background:#454545;"></div><div class="a" style="left:968px;top:283.5px;width:45px;height:20px;background:#4a4a4a;"></div><div class="a" style="left:1013px;top:283.5px;width:1px;height:20px;background:#424242;"></div><div class="a" style="left:1014px;top:283.5px;width:33px;height:20px;background:#4a4a4a;"></div><div class="a" style="left:1047px;top:283.5px;width:59px;height:20px;background:#535353;"></div><div class="t" style="left:975px;top:289.5px;font-size:7.3px;font-weight:bold;color:#a8a8a8;">Swatches</div><div class="t" style="left:1021px;top:289.5px;font-size:7.3px;font-weight:bold;color:#a8a8a8;">Color</div><svg class="a" style="left:1052px;top:289.5px" width="5" height="8" viewBox="0 0 5 8"><path d="M0.7 3 L2.5 1 L4.3 3 M0.7 5 L2.5 7 L4.3 5" stroke="#bdbdbd" stroke-width="0.9" fill="none"/></svg><div class="t" style="left:1059px;top:289.5px;font-size:7.3px;font-weight:bold;color:#e6e6e6;">Color Guide</div><svg class="a" style="left:1139px;top:291px" width="9" height="7" viewBox="0 0 9 7"><path d="M0.5 0.6 H8 M0.5 3.2 H8 M0.5 5.8 H8" stroke="#9c9c9c" stroke-width="0.85"/></svg><div class="a" style="left:972px;top:309.5px;width:15px;height:15px;background:#c4c2b5;border:1.2px solid #f0f0f0;box-shadow:inset 0 0 0 1px #000"></div><div class="a" style="left:991.5px;top:308px;width:155.5px;height:17.5px;background:#474747;"></div><div class="a" style="left:994px;top:312px;width:12px;height:12px;background:#c4c2b5;border:1px solid #eee;box-shadow:inset 0 0 0 1px #111"></div><div class="a" style="left:1006px;top:312px;width:22.6px;height:12px;background:linear-gradient(to right,#6f6d5a,#5d6a62 50%,#547070);"></div><div class="a" style="left:1028.6px;top:312px;width:12.1px;height:12px;background:#9985c6;"></div><div class="a" style="left:1040.7px;top:312px;width:12px;height:12px;background:#f7aaa7;"></div><div class="a" style="left:1133px;top:308px;width:14px;height:17.5px;background:#4a4a4a;"></div><svg class="a" style="left:1136.5px;top:315px" width="7" height="5" viewBox="0 0 7 5"><path d="M0.8 1 L3.5 3.8 L6.2 1" stroke="#cfcfcf" stroke-width="1.2" fill="none"/></svg><div class="t" style="left:992px;top:334px;font-size:7.3px;font-weight:bold;color:#c4c4c4;">Shades</div><svg class="a" style="left:1057px;top:337px" width="5" height="4" viewBox="0 0 5 4"><path d="M0.5 0.5 H4.5 L2.5 3.2 Z" fill="#bdbdbd"/></svg><div class="t" style="left:1108.5px;top:334px;font-size:7.3px;font-weight:bold;color:#c4c4c4;">Tints</div><div class="a" style="left:971px;top:343px;width:177px;height:109px;background:transparent;border:1px solid #4b4b4b"></div><svg class="a" style="left:975px;top:455px" width="13" height="9" viewBox="0 0 13 9"><g fill="none" stroke="#bdbdbd" stroke-width="0.9"><rect x="0.5" y="0.5" width="9" height="7"/><path d="M0.5 3 H9.5 M0.5 5.3 H9.5 M3.5 0.5 V7.5 M6.5 0.5 V7.5"/></g><rect x="11" y="7.5" width="1.3" height="1.3" fill="#bdbdbd"/></svg><div class="t" style="left:995px;top:456px;font-size:7.3px;font-weight:bold;color:#d0d0d0;">None</div><svg class="a" style="left:1102px;top:454px" width="11" height="11" viewBox="0 0 11 11"><circle cx="5.5" cy="5.5" r="4.6" fill="#9a9a9a" stroke="#d0d0d0" stroke-width="0.9"/><path d="M5.5 5.5 L5.5 0.9 A4.6 4.6 0 0 1 10.1 5.5 Z" fill="#e0e0e0"/></svg><svg class="a" style="left:1121px;top:455px" width="13" height="9" viewBox="0 0 13 9"><g fill="none" stroke="#c8c8c8" stroke-width="0.9"><rect x="4.5" y="0.5" width="8" height="8"/><path d="M7.3 0.5 V8.5 M10 0.5 V8.5"/><path d="M0.5 6 H5 M2.7 3.8 V8.2"/></g></svg><div class="a" style="left:966px;top:465.5px;width:186px;height:2.5px;background:#3e3e3e;"></div><div class="a" style="left:968px;top:468px;width:184px;height:19.5px;background:#454545;"></div><div class="a" style="left:968px;top:468px;width:37.5px;height:19.5px;background:#4a4a4a;"></div><div class="a" style="left:1005.5px;top:468px;width:1px;height:19.5px;background:#424242;"></div><div class="a" style="left:1006.5px;top:468px;width:45.5px;height:19.5px;background:#535353;"></div><div class="t" style="left:975px;top:474px;font-size:7.3px;font-weight:bold;color:#a8a8a8;">Stroke</div><svg class="a" style="left:1010.5px;top:474px" width="5" height="8" viewBox="0 0 5 8"><path d="M0.7 3 L2.5 1 L4.3 3 M0.7 5 L2.5 7 L4.3 5" stroke="#bdbdbd" stroke-width="0.9" fill="none"/></svg><div class="t" style="left:1017px;top:474px;font-size:7.3px;font-weight:bold;color:#e6e6e6;">Gradient</div><svg class="a" style="left:1139px;top:475px" width="9" height="7" viewBox="0 0 9 7"><path d="M0.5 0.6 H8 M0.5 3.2 H8 M0.5 5.8 H8" stroke="#9c9c9c" stroke-width="0.85"/></svg><div class="a" style="left:973px;top:493px;width:22px;height:22.5px;background:linear-gradient(to right,#f0f0f0,#3a3a3a);box-shadow:1px 1px 1px #2a2a2a"></div><svg class="a" style="left:998px;top:502px" width="5" height="4" viewBox="0 0 5 4"><path d="M0.5 0.5 H4.5 L2.5 3.2 Z" fill="#bdbdbd"/></svg><div class="t" style="left:1012px;top:497.5px;font-size:7.5px;color:#d8d8d8;">Type:</div><div class="a" style="left:1034.5px;top:495px;width:13px;height:13px;background:linear-gradient(to right,#444,#ccc);border:1px solid #cfcfcf"></div><div class="a" style="left:1052.5px;top:495px;width:13px;height:13px;background:radial-gradient(circle,#ccc 0,#555 80%);border:1px solid #cfcfcf"></div><div class="a" style="left:1071px;top:495px;width:13px;height:13px;background:linear-gradient(135deg,#444,#ddd 50%,#555);border:1px solid #cfcfcf"></div><div class="t" style="left:1006px;top:518.5px;font-size:7.5px;color:#707070;">Stroke:</div><div class="a" style="left:1032px;top:514px;width:15.5px;height:15.5px;background:#505050;border:1px solid #5a5a5a"></div><div class="a" style="left:1051px;top:514px;width:15.5px;height:15.5px;background:#505050;border:1px solid #5a5a5a"></div><div class="a" style="left:1068.5px;top:514px;width:15.5px;height:15.5px;background:#505050;border:1px solid #5a5a5a"></div><svg class="a" style="left:1035px;top:517px" width="50" height="10" viewBox="0 0 50 10"><g fill="none" stroke="#6a6a6a" stroke-width="1.5"><path d="M2 9 V2 H8 V6 H5"/><path d="M21 9 V2 H27 M21 5 H25"/><path d="M39 9 V2 H46 M42 9 V5 H46"/></g></svg><div class="a" style="left:973px;top:520px;width:13.5px;height:13.5px;background:#c4c2b5;border:1px solid #d8d8d0"></div><div class="a" style="left:980px;top:527px;width:13.5px;height:14px;background:#000;border:1px solid #eee"></div><div class="a" style="left:983px;top:530.5px;width:7px;height:7px;background:transparent;border:1px solid #eee;background:#535353"></div><div class="a" style="left:973px;top:520px;width:13.5px;height:13.5px;background:#c4c2b5;border:1px solid #d8d8d0"></div><svg class="a" style="left:976px;top:548px" width="12" height="13" viewBox="0 0 12 13"><g fill="none" stroke="#6c6c6c" stroke-width="0.9"><rect x="0.5" y="0.5" width="4" height="3.5"/><path d="M6 2 L8 3.5 L6 5"/><rect x="4.5" y="7.5" width="6" height="4"/><path d="M0.5 9.5 H3 M1.8 8 V11"/></g></svg><svg class="a" style="left:1016px;top:535px" width="12" height="11" viewBox="0 0 12 11"><path d="M1 10 H11 M1 10 L7.5 1 M5 10 A5 5 0 0 0 4 6" stroke="#777" stroke-width="1" fill="none"/></svg><div class="a" style="left:1032px;top:534px;width:51px;height:14px;background:#4e4e4e;"></div><svg class="a" style="left:1071px;top:539px" width="7" height="5" viewBox="0 0 7 5"><path d="M0.8 1 L3.5 3.8 L6.2 1" stroke="#777" stroke-width="1.2" fill="none"/></svg><svg class="a" style="left:1016px;top:553px" width="14" height="13" viewBox="0 0 14 13"><g fill="none" stroke="#777" stroke-width="0.9"><ellipse cx="8.5" cy="6" rx="4.5" ry="3"/><path d="M2 1 V12 M0.5 2.5 L2 1 L3.5 2.5 M0.5 10.5 L2 12 L3.5 10.5"/></g></svg><div class="a" style="left:1032px;top:551.5px;width:51px;height:15.5px;background:#4e4e4e;"></div><svg class="a" style="left:1071px;top:557px" width="7" height="5" viewBox="0 0 7 5"><path d="M0.8 1 L3.5 3.8 L6.2 1" stroke="#777" stroke-width="1.2" fill="none"/></svg><div class="a" style="left:979.5px;top:582.5px;width:143.5px;height:15.5px;background:linear-gradient(to right,#f2f2f2,#c8c8c8 25%,#8a8a8a 55%,#4a4444 80%,#2a2324);"></div><svg class="a" style="left:1134px;top:585px" width="8" height="10" viewBox="0 0 8 10"><g fill="none" stroke="#6e6e6e" stroke-width="0.9"><path d="M0.5 2 H7.5 M2.5 2 V0.5 H5.5 V2"/><rect x="1.3" y="2" width="5.4" height="7.5"/><path d="M3.2 3.5 V8 M4.8 3.5 V8"/></g></svg><svg class="a" style="left:976px;top:622px" width="12" height="12" viewBox="0 0 12 12"><path d="M1 11 L2 8 L7 3 L9 5 L4 10 Z M7.5 2.5 L9 1 Q10.5 0.5 11 2 L9.5 3.5" fill="none" stroke="#6a6a6a" stroke-width="1"/></svg><div class="t" style="left:1003px;top:616.5px;font-size:7.5px;color:#666;">Opacity:</div><div class="a" style="left:1032px;top:613px;width:51px;height:14.5px;background:#4e4e4e;"></div><svg class="a" style="left:1071px;top:618.5px" width="7" height="5" viewBox="0 0 7 5"><path d="M0.8 1 L3.5 3.8 L6.2 1" stroke="#6a6a6a" stroke-width="1.2" fill="none"/></svg><div class="t" style="left:999.5px;top:635.5px;font-size:7.5px;color:#666;">Location:</div><div class="a" style="left:1032px;top:631.5px;width:51px;height:15px;background:#4e4e4e;"></div><svg class="a" style="left:1071px;top:637px" width="7" height="5" viewBox="0 0 7 5"><path d="M0.8 1 L3.5 3.8 L6.2 1" stroke="#6a6a6a" stroke-width="1.2" fill="none"/></svg><div class="a" style="left:966px;top:650px;width:186px;height:2px;background:#3e3e3e;"></div><div class="a" style="left:968px;top:652px;width:184px;height:21px;background:#454545;"></div><div class="a" style="left:968px;top:652px;width:48px;height:21px;background:#535353;"></div><div class="a" style="left:1016px;top:652px;width:34px;height:21px;background:#4a4a4a;"></div><div class="a" style="left:1050px;top:652px;width:1px;height:21px;background:#424242;"></div><div class="a" style="left:1051px;top:652px;width:42px;height:21px;background:#4a4a4a;"></div><div class="t" style="left:975px;top:659px;font-size:7.3px;font-weight:bold;color:#e6e6e6;">Artboards</div><div class="t" style="left:1023px;top:659px;font-size:7.3px;font-weight:bold;color:#a8a8a8;">Layers</div><div class="t" style="left:1058px;top:659px;font-size:7.3px;font-weight:bold;color:#a8a8a8;">Libraries</div><svg class="a" style="left:1139px;top:659px" width="9" height="7" viewBox="0 0 9 7"><path d="M0.5 0.6 H8 M0.5 3.2 H8 M0.5 5.8 H8" stroke="#9c9c9c" stroke-width="0.85"/></svg>
<div class="a" style="left:973px;top:346.5px;width:174px;height:55px;display:grid;grid-template-columns:repeat(9,1fr);grid-template-rows:repeat(5,1fr);gap:1px;background:#6a6a6a"><div style="background:#000000"></div><div style="background:#2e2b27"></div><div style="background:#5b5953"></div><div style="background:#8f8d84"></div><div style="background:#b4b2a6"></div><div style="background:#c7c5ba"></div><div style="background:#d6d5cc"></div><div style="background:#e2e1db"></div><div style="background:#eeede9"></div><div style="background:#000000"></div><div style="background:#1d1c19"></div><div style="background:#393830"></div><div style="background:#575548"></div><div style="background:#72705f"></div><div style="background:#8b8a78"></div><div style="background:#a9a899"></div><div style="background:#c6c6b9"></div><div style="background:#dfdfd8"></div><div style="background:#000000"></div><div style="background:#181d1d"></div><div style="background:#2c3838"></div><div style="background:#42595a"></div><div style="background:#597575"></div><div style="background:#739090"></div><div style="background:#98adac"></div><div style="background:#bccac9"></div><div style="background:#dee5e5"></div><div style="background:#000000"></div><div style="background:#2a2535"></div><div style="background:#4f4468"></div><div style="background:#7a6b9f"></div><div style="background:#9c8cca"></div><div style="background:#ad9cd5"></div><div style="background:#c4b6e2"></div><div style="background:#d9d0ed"></div><div style="background:#ece8f6"></div><div style="background:#000000"></div><div style="background:#4a3230"></div><div style="background:#8a5c5b"></div><div style="background:#c98f8b"></div><div style="background:#f7a9a7"></div><div style="background:#fab4b1"></div><div style="background:#fbc5c3"></div><div style="background:#fdd8d6"></div><div style="background:#feebe9"></div></div>
<div class="a" style="left:30px;top:661px;width:895px;height:12px;background:#414141;"></div><div class="a" style="left:925px;top:661px;width:13px;height:12px;background:#474747;"></div><div class="t" style="left:35.5px;top:665.2px;font-size:7.2px;color:#d0d0d0;">150%</div><div class="a" style="left:70.5px;top:661px;width:0.8px;height:12px;background:#4a4a4a;"></div><svg class="a" style="left:72.5px;top:665.5px" width="7" height="5" viewBox="0 0 7 5"><path d="M0.8 1 L3.5 3.8 L6.2 1" stroke="#c8c8c8" stroke-width="1.2" fill="none"/></svg><div class="a" style="left:84px;top:661px;width:0.8px;height:12px;background:#4a4a4a;"></div><svg class="a" style="left:88px;top:663px" width="20" height="8" viewBox="0 0 20 8"><path d="M1 0.5 V7.5" stroke="#5e5e5e" stroke-width="1.2"/><path d="M7.5 0.5 L2.5 4 L7.5 7.5 Z M18 0.5 L13.5 4 L18 7.5 Z" fill="#5e5e5e"/></svg><div class="a" style="left:110px;top:661px;width:0.8px;height:12px;background:#4a4a4a;"></div><div class="t" style="left:116px;top:665.2px;font-size:7.2px;color:#d0d0d0;">1</div><div class="a" style="left:143.5px;top:661px;width:0.8px;height:12px;background:#4a4a4a;"></div><svg class="a" style="left:146px;top:665.5px" width="7" height="5" viewBox="0 0 7 5"><path d="M0.8 1 L3.5 3.8 L6.2 1" stroke="#c8c8c8" stroke-width="1.2" fill="none"/></svg><div class="a" style="left:157px;top:661px;width:0.8px;height:12px;background:#4a4a4a;"></div><svg class="a" style="left:162px;top:663px" width="20" height="8" viewBox="0 0 20 8"><path d="M1 0.5 L5.5 4 L1 7.5 Z M11 0.5 L16 4 L11 7.5 Z" fill="#a8a8a8"/><path d="M18 0.5 V7.5" stroke="#a8a8a8" stroke-width="1.2"/></svg><div class="a" style="left:186px;top:661px;width:0.8px;height:12px;background:#4a4a4a;"></div><div class="t" style="left:238px;top:665.2px;font-size:7.3px;color:#bdbdbd;">Shape Builder</div><div class="a" style="left:331px;top:661px;width:0.8px;height:12px;background:#4a4a4a;"></div><svg class="a" style="left:337px;top:663px" width="20" height="8" viewBox="0 0 20 8"><path d="M1 0.5 L5.5 4 L1 7.5 Z" fill="#b0b0b0"/><path d="M16.5 1 L14 4 L16.5 7" stroke="#8a8a8a" stroke-width="1" fill="none"/></svg><div class="a" style="left:358px;top:661px;width:567px;height:12px;background:#3c3c3c;"></div><div class="a" style="left:690px;top:663px;width:18px;height:9px;background:#4e4e4e;border-radius:4.5px"></div><svg class="a" style="left:916px;top:664px" width="5" height="7" viewBox="0 0 5 7"><path d="M1 0.8 L3.8 3.5 L1 6.2" stroke="#8a8a8a" stroke-width="1" fill="none"/></svg><svg class="a" style="left:927.5px;top:652px" width="8" height="5" viewBox="0 0 8 5"><path d="M1 1 L4 4 L7 1" stroke="#8a8a8a" stroke-width="1" fill="none"/></svg>
<div class="a" style="left:1151px;top:57px;width:1px;height:616px;background:#444"></div>
<!-- END -->
<div class="a" style="left:0;top:415px;width:1152px;height:261px;background:linear-gradient(to bottom,#fff,#bfbfbf);mix-blend-mode:multiply;pointer-events:none"></div>
</body></html>
